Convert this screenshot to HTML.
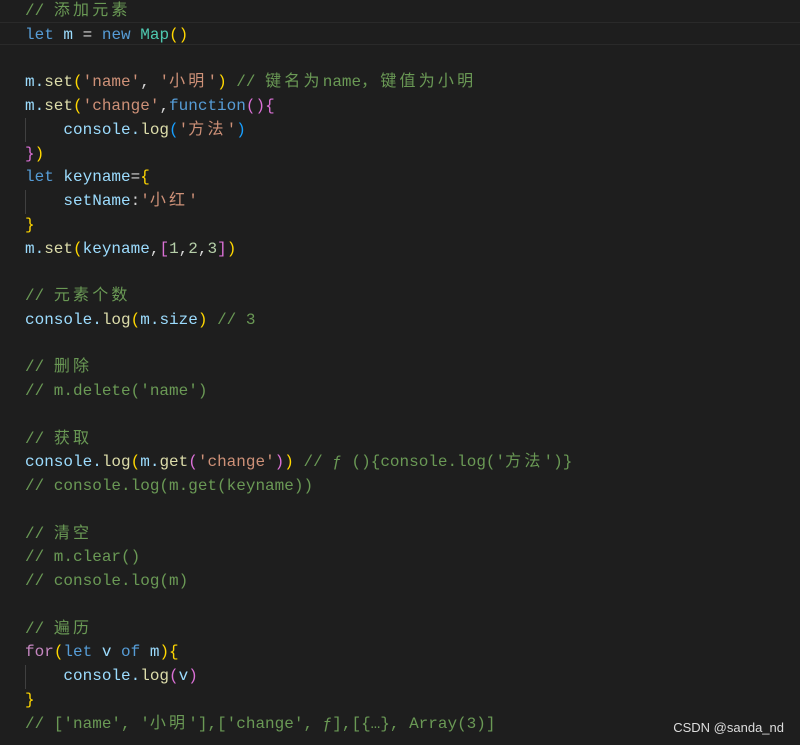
<!DOCTYPE html>
<html><head><meta charset="utf-8"><style>
body{margin:0;background:#1e1e1e;width:800px;height:745px;overflow:hidden;position:relative}
pre{margin:0;position:absolute;left:25px;top:0px;font-family:"Liberation Mono","Noto Sans CJK SC",monospace;font-size:16px;line-height:23.75px;color:#9cdcfe;white-space:pre}
.hl{position:absolute;left:0;right:0;top:22px;height:23px;border-top:1px solid #2a2a2a;border-bottom:1px solid #2a2a2a;box-sizing:border-box}
.g{position:absolute;left:25px;width:1px;background:#404040}
.c{color:#6a9955}.k{color:#569cd6}.f{color:#dcdcaa}.s{color:#ce9178}.t{color:#4ec9b0}.n{color:#b5cea8}.w{color:#d4d4d4}.p{color:#c586c0}
.y{color:#ffd700}.m{color:#da70d6}.b{color:#179fff}
i{font-style:normal;letter-spacing:3.2px}
.wm{position:absolute;right:16px;top:720px;font-family:"Liberation Sans",sans-serif;font-size:13px;color:#ddd}
</style></head><body>
<div class="hl"></div>
<div class="g" style="top:118px;height:24px"></div>
<div class="g" style="top:190px;height:24px"></div>
<div class="g" style="top:665px;height:24px"></div>
<pre><span class="c">// <i>添加元素</i></span>
<span class="k">let</span> m <span class="w">=</span> <span class="k">new</span> <span class="t">Map</span><span class="y">()</span>

m.<span class="f">set</span><span class="y">(</span><span class="s">'name'</span><span class="w">,</span> <span class="s">'<i>小明</i>'</span><span class="y">)</span> <span class="c">// <i>键名为</i>name<i>，键值为小明</i></span>
m.<span class="f">set</span><span class="y">(</span><span class="s">'change'</span><span class="w">,</span><span class="k">function</span><span class="m">(){</span>
    console.<span class="f">log</span><span class="b">(</span><span class="s">'<i>方法</i>'</span><span class="b">)</span>
<span class="m">}</span><span class="y">)</span>
<span class="k">let</span> keyname<span class="w">=</span><span class="y">{</span>
    setName<span class="w">:</span><span class="s">'<i>小红</i>'</span>
<span class="y">}</span>
m.<span class="f">set</span><span class="y">(</span>keyname<span class="w">,</span><span class="m">[</span><span class="n">1</span><span class="w">,</span><span class="n">2</span><span class="w">,</span><span class="n">3</span><span class="m">]</span><span class="y">)</span>

<span class="c">// <i>元素个数</i></span>
console.<span class="f">log</span><span class="y">(</span>m.size<span class="y">)</span> <span class="c">// 3</span>

<span class="c">// <i>删除</i></span>
<span class="c">// m.delete('name')</span>

<span class="c">// <i>获取</i></span>
console.<span class="f">log</span><span class="y">(</span>m.<span class="f">get</span><span class="m">(</span><span class="s">'change'</span><span class="m">)</span><span class="y">)</span> <span class="c">// ƒ (){console.log('<i>方法</i>')}</span>
<span class="c">// console.log(m.get(keyname))</span>

<span class="c">// <i>清空</i></span>
<span class="c">// m.clear()</span>
<span class="c">// console.log(m)</span>

<span class="c">// <i>遍历</i></span>
<span class="p">for</span><span class="y">(</span><span class="k">let</span> v <span class="k">of</span> m<span class="y">){</span>
    console.<span class="f">log</span><span class="m">(</span>v<span class="m">)</span>
<span class="y">}</span>
<span class="c">// ['name', '<i>小明</i>'],['change', ƒ],[{…}, Array(3)]</span></pre>
<div class="wm">CSDN @sanda_nd</div>
</body></html>
